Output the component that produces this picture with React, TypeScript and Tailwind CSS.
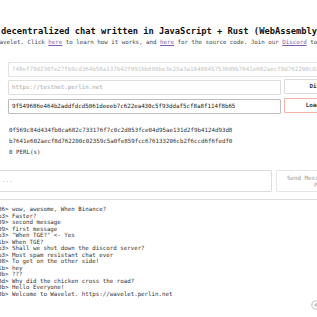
import React from "react";

const mono = { fontFamily: '"DejaVu Sans Mono", "Liberation Mono", monospace' };

const chat: [string, string][] = [
  ["06>", "wow, awesome, When Binance?"],
  ["b3>", "Faster?"],
  ["09>", "second message"],
  ["09>", "first message"],
  ["b3>", "\"When TGE?\" <- Yes"],
  ["1b>", "When TGE?"],
  ["b3>", "Shall we shut down the discord server?"],
  ["b3>", "Most spam resistant chat ever"],
  ["08>", "To get on the other side!"],
  ["1b>", "hey"],
  ["0b>", "???"],
  ["0d>", "Why did the chicken cross the road?"],
  ["0b>", "Hello Everyone!"],
  ["0b>", "Welcome to Wavelet. https://wavelet.perlin.net"],
];

export default function App() {
  return (
    <div
      className="relative w-[317px] h-[317px] overflow-hidden bg-white text-[#333]"
      style={mono}
    >
      <div className="flex flex-col">
        <div className="mt-[26px] ml-[1px] h-[11px] leading-[11px] text-[8.75px] font-bold text-[#111] whitespace-nowrap">
          decentralized chat written in JavaScript + Rust (WebAssembly).
        </div>
        <div className="mt-[2px] ml-[-4px] h-[7px] leading-[7px] text-[5.8px] text-[#444] whitespace-nowrap">
          Wavelet. Click <span className="text-[#7d5fae] underline">here</span> to learn how it works, and{" "}
          <span className="text-[#7d5fae] underline">here</span> for the source code. Join our{" "}
          <span className="text-[#7d5fae] underline">Discord</span> to chat.
        </div>

        <div className="mt-[16px] ml-[8px] w-[400px] shrink-0 h-[15px] border border-[#e3e3e3] rounded-[1px] flex items-center pl-[3px] text-[5.8px] text-[#c4c4c4] whitespace-nowrap overflow-hidden">
          748ef79d230fe27fb9cd364b58a137b42f091bb698be3e25a3a1848845753609b7641e602aecf8d762200c02359c5a0fe859fcc676133206cb2f6ccd6f6fedf0
        </div>

        <div className="mt-[3px] ml-[8px] flex gap-[3px] whitespace-nowrap">
          <div className="w-[273px] shrink-0 h-[15px] border border-[#dedede] rounded-[1px] flex items-center pl-[3px] text-[5.8px] text-[#a8a8a8]">
            https://testnet.perlin.net
          </div>
          <div className="w-[86px] shrink-0 h-[15px] mt-[-1px] border border-[#dcdcdc] rounded-[1px] flex items-center justify-center text-[5.8px] font-bold text-[#333]">
            Disconnect
          </div>
        </div>

        <div className="mt-[4px] ml-[8px] flex gap-[3px] whitespace-nowrap">
          <div className="w-[273px] shrink-0 h-[15px] border border-[#bdbdbd] rounded-[1px] flex items-center pl-[3px] text-[5.8px] text-[#222]">
            9f549686e464b2addfdcd5061deeeb7c622ea430c5f93ddaf5cf8a8f114f8b65
          </div>
          <div className="w-[82px] shrink-0 h-[15px] mt-[-1px] border border-[#f1b4a6] rounded-[1px] flex items-center justify-center text-[5.8px] font-bold text-[#333]">
            Load Wallet
          </div>
        </div>

        <div className="mt-[11px] ml-[9px] flex flex-col text-[5.8px] leading-[11px] text-[#333] whitespace-nowrap">
          <div>0f569c84d434fb0ca682c733176f7c0c2d853fce04d95ae131d2f9b4124d93d8</div>
          <div>b7641e602aecf8d762200c02359c5a0fe859fcc676133206cb2f6ccd6f6fedf0</div>
          <div>0 PERL(s)</div>
        </div>

        <div className="mt-[12px] ml-[-2px] flex gap-[4px] whitespace-nowrap">
          <div className="w-[274px] shrink-0 h-[22px] border border-[#dcdcdc] rounded-[1px] pl-[3px] pt-[6px] text-[5.8px] leading-[6px] text-[#aaa]">
            ...
          </div>
          <div className="w-[90px] shrink-0 h-[22px] border border-[#e6e6e6] rounded-[1px] flex flex-col pt-[4px] pl-[10px] text-[5.8px] leading-[7px] text-[#9a9a9a]">
            <span>Send Message</span>
            <span className="pl-[27px]">Press Enter</span>
          </div>
        </div>

        <div className="mt-[7px] w-full border-t border-[#dcdcdc]" />

        <div className="mt-[6px] ml-[-2px] flex flex-col text-[5.8px] leading-[6.5px] text-[#333] whitespace-pre">
          {chat.map(([p, m], i) => (
            <div key={i}>
              {p} {m}
            </div>
          ))}
        </div>
      </div>

      <div className="absolute right-[-4px] bottom-[7px] w-[10px] h-[10px]">
        <svg viewBox="0 0 10 10" width="10" height="10">
          <circle cx="5" cy="5" r="4.2" fill="none" stroke="#b5b5b5" strokeWidth="0.9" />
          <circle cx="5" cy="5" r="1.8" fill="#c8c8c8" />
        </svg>
      </div>
    </div>
  );
}
